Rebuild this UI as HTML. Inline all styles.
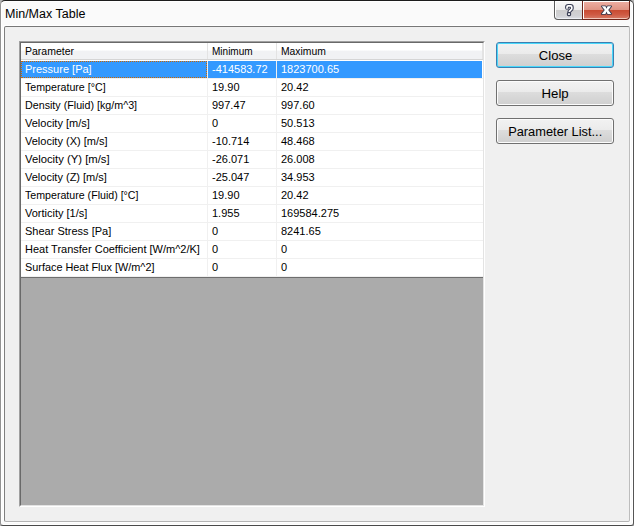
<!DOCTYPE html>
<html><head><meta charset="utf-8">
<style>
*{margin:0;padding:0;box-sizing:border-box}
html,body{width:634px;height:526px;overflow:hidden;background:#b4b4b4}
body{position:relative;font-family:"Liberation Sans",sans-serif;}
.abs{position:absolute}
#win{left:0;top:0;width:634px;height:526px;border-style:solid;border-width:1px;border-color:#1c1c1c #555 #4a4a4a #929292;border-radius:5px 5px 3px 3px;background:#fafafa;box-shadow:inset 1px 1px 0 #fff, inset -1px -1px 0 #fff}
#title{left:5px;top:6px;font-size:12.5px;line-height:16px;color:#000;white-space:pre}
#frame{left:4px;top:26px;width:626px;height:496px;border-style:solid;border-width:1px;border-color:#777 #bdbdbd #b4b4b4 #7f7f7f;border-radius:2px;background:#f0f0f0;box-shadow:-1px -1px 0 #fff, 1px 1px 0 #fff}
.tb{top:1px;height:19px;border:1px solid #5a5a5a;border-top:none}
#help{left:554px;width:29px;border-radius:0 0 0 4px;background:linear-gradient(#f8f8f8 0,#ebebeb 50%,#cdcdcd 52%,#d0d1d4 80%,#dcdee3 100%);box-shadow:inset 1px 1px 0 #fff,inset 0 -1px 0 #eef0f4}
#close{left:582px;width:48px;border-color:#6f2418;border-radius:0 0 4px 0;background:linear-gradient(#eeb0a4 0,#e09484 48%,#c84a31 50%,#cf5a43 75%,#d67c69 100%);box-shadow:inset 1px 1px 0 #fff,inset 0 -1px 0 #f2c7bb}
.hdr{height:17px;background:linear-gradient(#fff 0,#fff 45%,#f1f2f4 50%,#f1f2f4 100%);border-bottom:1px solid #d5d5d5}
.hs{width:1px;height:16px;background:#e3e3e3}
.cell{font-size:11px;line-height:13px;white-space:pre;color:#000}
.gh{width:462px;height:1px;background:#f0f0f0}
.gv{width:1px;background:#f0f0f0}
.sel{background:#3399ff}
.focus{border:1px dotted #cc6600}
.btn{left:496px;width:118px;height:26px;border:1px solid #707070;border-radius:3px;background:linear-gradient(#f2f2f2 0,#ebebeb 45%,#dddddd 46%,#cfcfcf 100%);box-shadow:inset 0 0 0 1px #fcfcfc;font-size:13.7px;line-height:25px;text-align:center;color:#000}
.btn span{display:inline-block;transform-origin:50% 50%}
.btn.def{border-color:#3c7fb1;box-shadow:inset 0 0 0 1px #48d8fb}

</style></head><body>
<div id="win" class="abs"></div>
<div id="title" class="abs">Min/Max Table</div>
<div id="help" class="abs tb"><svg width="29" height="19" viewBox="0 0 29 19" style="position:absolute;left:-1px;top:0"><path d="M13,6.7 L13,6.1 Q13,4.9 14.3,4.9 L16.5,4.9 Q17.8,4.9 17.8,6.2 L17.8,7.5 Q17.8,8.4 16.6,9.1 L15.4,10.3" fill="none" stroke="#3a3f55" stroke-width="3.9" stroke-linecap="round" stroke-linejoin="round"/><path d="M13,7.1 L13,6.1 Q13,4.9 14.3,4.9 L16.5,4.9 Q17.8,4.9 17.8,6.2 L17.8,7.5 Q17.8,8.4 16.6,9.1 L15.4,10.3" fill="none" stroke="#fff" stroke-width="1.7" stroke-linecap="round" stroke-linejoin="round"/><rect x="13.5" y="11.5" width="3" height="3" rx="0.8" fill="#fff" stroke="#3a3f55" stroke-width="1.25"/></svg></div>
<div id="close" class="abs tb"><svg width="48" height="19" viewBox="0 0 48 19" style="position:absolute;left:-1px;top:0"><path d="M19.8,5.3 L23.4,5.3 L24.5,7.8 L25.6,5.3 L29.2,5.3 L26.2,9.1 L29.2,12.9 L25.6,12.9 L24.5,10.4 L23.4,12.9 L19.8,12.9 L22.8,9.1 Z" fill="#fff" stroke="#343a50" stroke-width="1.7" stroke-linejoin="round" paint-order="stroke"/></svg></div>
<div id="frame" class="abs"></div>
<div class="abs" style="left:19px;top:41px;width:466px;height:466px;border-style:solid;border-width:1px;border-color:#a0a0a0 #fff #fff #a0a0a0"></div>
<div class="abs" style="left:20px;top:42px;width:464px;height:464px;border-style:solid;border-width:1px;border-color:#696969 #e3e3e3 #e3e3e3 #696969;background:#ababab"></div>
<div class="abs" style="left:21px;top:43px;width:462px;height:234px;background:#fff"></div>
<div class="abs" style="left:21px;top:277px;width:462px;height:1px;background:#6e6e6e"></div>
<div class="abs hdr" style="left:21px;top:43px;width:462px"></div>
<div class="abs hs" style="left:207px;top:43px"></div>
<div class="abs hs" style="left:276px;top:43px"></div>
<div class="abs hs" style="left:482px;top:43px"></div>
<div class="abs cell" style="left:25px;top:45px;transform:scaleX(0.955);transform-origin:0 0">Parameter</div>
<div class="abs cell" style="left:212px;top:45px;transform:scaleX(0.91);transform-origin:0 0">Minimum</div>
<div class="abs cell" style="left:281px;top:45px;transform:scaleX(0.94);transform-origin:0 0">Maximum</div>
<div class="abs sel" style="left:21px;top:61px;width:186px;height:17px"></div>
<div class="abs sel" style="left:208px;top:61px;width:68px;height:17px"></div>
<div class="abs sel" style="left:277px;top:61px;width:205px;height:17px"></div>
<div class="abs focus" style="left:21px;top:61px;width:186px;height:17px"></div>
<div class="abs gh" style="left:21px;top:78px"></div>
<div class="abs cell" style="left:25px;top:63px;color:#fff">Pressure [Pa]</div>
<div class="abs cell" style="left:212px;top:63px;color:#fff">-414583.72</div>
<div class="abs cell" style="left:281px;top:63px;color:#fff">1823700.65</div>
<div class="abs gh" style="left:21px;top:96px"></div>
<div class="abs cell" style="left:25px;top:81px;color:#000;transform:scaleX(0.968);transform-origin:0 0">Temperature [°C]</div>
<div class="abs cell" style="left:212px;top:81px;color:#000">19.90</div>
<div class="abs cell" style="left:281px;top:81px;color:#000">20.42</div>
<div class="abs gh" style="left:21px;top:114px"></div>
<div class="abs cell" style="left:25px;top:99px;color:#000;transform:scaleX(0.973);transform-origin:0 0">Density (Fluid) [kg/m^3]</div>
<div class="abs cell" style="left:212px;top:99px;color:#000">997.47</div>
<div class="abs cell" style="left:281px;top:99px;color:#000">997.60</div>
<div class="abs gh" style="left:21px;top:132px"></div>
<div class="abs cell" style="left:25px;top:117px;color:#000">Velocity [m/s]</div>
<div class="abs cell" style="left:212px;top:117px;color:#000">0</div>
<div class="abs cell" style="left:281px;top:117px;color:#000">50.513</div>
<div class="abs gh" style="left:21px;top:150px"></div>
<div class="abs cell" style="left:25px;top:135px;color:#000">Velocity (X) [m/s]</div>
<div class="abs cell" style="left:212px;top:135px;color:#000">-10.714</div>
<div class="abs cell" style="left:281px;top:135px;color:#000">48.468</div>
<div class="abs gh" style="left:21px;top:168px"></div>
<div class="abs cell" style="left:25px;top:153px;color:#000;transform:scaleX(1.025);transform-origin:0 0">Velocity (Y) [m/s]</div>
<div class="abs cell" style="left:212px;top:153px;color:#000">-26.071</div>
<div class="abs cell" style="left:281px;top:153px;color:#000">26.008</div>
<div class="abs gh" style="left:21px;top:186px"></div>
<div class="abs cell" style="left:25px;top:171px;color:#000">Velocity (Z) [m/s]</div>
<div class="abs cell" style="left:212px;top:171px;color:#000">-25.047</div>
<div class="abs cell" style="left:281px;top:171px;color:#000">34.953</div>
<div class="abs gh" style="left:21px;top:204px"></div>
<div class="abs cell" style="left:25px;top:189px;color:#000;transform:scaleX(0.966);transform-origin:0 0">Temperature (Fluid) [°C]</div>
<div class="abs cell" style="left:212px;top:189px;color:#000">19.90</div>
<div class="abs cell" style="left:281px;top:189px;color:#000">20.42</div>
<div class="abs gh" style="left:21px;top:222px"></div>
<div class="abs cell" style="left:25px;top:207px;color:#000">Vorticity [1/s]</div>
<div class="abs cell" style="left:212px;top:207px;color:#000">1.955</div>
<div class="abs cell" style="left:281px;top:207px;color:#000">169584.275</div>
<div class="abs gh" style="left:21px;top:240px"></div>
<div class="abs cell" style="left:25px;top:225px;color:#000">Shear Stress [Pa]</div>
<div class="abs cell" style="left:212px;top:225px;color:#000">0</div>
<div class="abs cell" style="left:281px;top:225px;color:#000">8241.65</div>
<div class="abs gh" style="left:21px;top:258px"></div>
<div class="abs cell" style="left:25px;top:243px;color:#000">Heat Transfer Coefficient [W/m^2/K]</div>
<div class="abs cell" style="left:212px;top:243px;color:#000">0</div>
<div class="abs cell" style="left:281px;top:243px;color:#000">0</div>
<div class="abs gh" style="left:21px;top:276px"></div>
<div class="abs cell" style="left:25px;top:261px;color:#000;transform:scaleX(0.988);transform-origin:0 0">Surface Heat Flux [W/m^2]</div>
<div class="abs cell" style="left:212px;top:261px;color:#000">0</div>
<div class="abs cell" style="left:281px;top:261px;color:#000">0</div>
<div class="abs gv" style="left:207px;top:61px;height:215px"></div>
<div class="abs gv" style="left:276px;top:61px;height:215px"></div>
<div class="abs btn def" style="top:42px"><span style="transform:scaleX(0.954)">Close</span></div>
<div class="abs btn" style="top:80px"><span style="transform:scaleX(0.965)">Help</span></div>
<div class="abs btn" style="top:118px"><span style="transform:scaleX(0.937)">Parameter List...</span></div>
</body></html>
